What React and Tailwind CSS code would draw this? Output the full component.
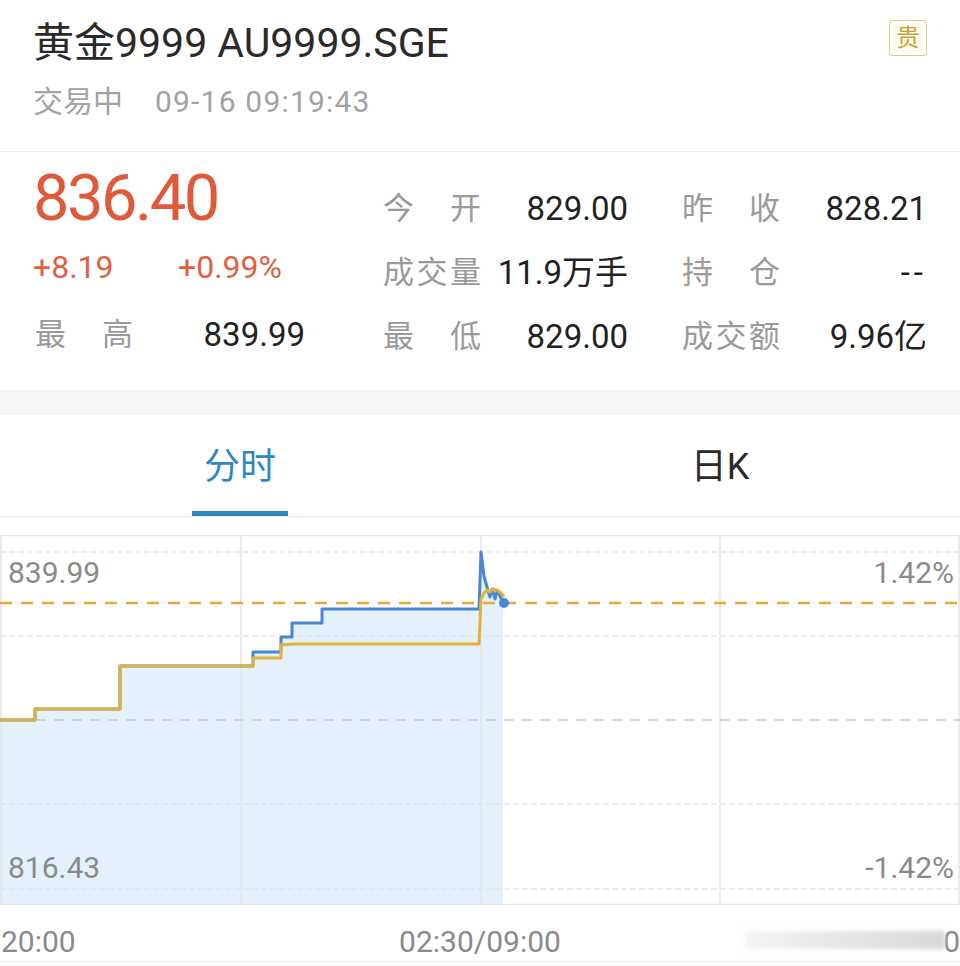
import React from "react";

const font = { fontFamily: '"Roboto", "Noto Sans CJK SC", sans-serif' };

const stats = [
  [["今", "开"], "829.00", ["昨", "收"], "828.21"],
  [["成", "交", "量"], "11.9万手", ["持", "仓"], "--"],
  [["最", "低"], "829.00", ["成", "交", "额"], "9.96亿"],
];

function Label({ chars }) {
  return (
    <div className="flex w-[98px] justify-between text-[31px] text-[#9a9a9a]">
      {chars.map((c, i) => (
        <span key={i}>{c}</span>
      ))}
    </div>
  );
}

function Chart() {
  const blue =
    "M0,185 L35,185 L35,174 L120,174 L120,131 L253,131 L253,117 L281,117 L281,102 L292,102 L292,88 L322,88 L322,74 L479,74 L481,17 L484,41 L487,52 L490,62 L492,54 L495,64 L497,56 L500,61 L503,68";
  const yellow =
    "M0,185 L35,185 L35,174 L120,174 L120,131 L253,131 L253,123 L281,123 L281,110 L293,109 L479,109 L481,64 L484,58 L487,55 L490,57 L493,54 L497,55 L501,58 L504,62";
  return (
    <div className="relative h-[370px] w-full">
      <svg width="960" height="370" viewBox="0 0 960 370" className="block">
        <path d={blue + " L503,370 L0,370 Z"} fill="#e4f1fc" />
        {[0.5, 17, 101, 269, 354, 369.5].map((y) => (
          <line key={y} x1="0" x2="960" y1={y} y2={y} stroke="#e4e4e4" strokeWidth="1.5" strokeDasharray={y === 0.5 || y === 369.5 ? "" : "6 3"} />
        ))}
        {[1, 241, 481, 720, 959].map((x) => (
          <line key={x} x1={x} x2={x} y1="0" y2="370" stroke="#e4e4e4" strokeWidth="1.5" />
        ))}
        <line x1="0" x2="960" y1="185" y2="185" stroke="#c9c9c9" strokeWidth="1.5" strokeDasharray="10 8" />
        <line x1="0" x2="960" y1="68" y2="68" stroke="#e8a83c" strokeWidth="2.5" strokeDasharray="12 9" />
        <path d={blue} fill="none" stroke="#4b86d6" strokeWidth="3" strokeLinejoin="round" />
        <path d={yellow} fill="none" stroke="#dfb33b" strokeWidth="3" strokeLinejoin="round" />
        <circle cx="504" cy="68" r="5" fill="#4b86d6" />
      </svg>
      <div className="absolute left-[8px] top-[21px] text-[30px] leading-[34px] text-[#8a8a8a]">839.99</div>
      <div className="absolute right-[6px] top-[21px] text-[30px] leading-[34px] text-[#8a8a8a]">1.42%</div>
      <div className="absolute left-[8px] top-[316px] text-[30px] leading-[34px] text-[#8a8a8a]">816.43</div>
      <div className="absolute right-[6px] top-[316px] text-[30px] leading-[34px] text-[#8a8a8a]">-1.42%</div>
    </div>
  );
}

export default function App() {
  return (
    <div className="h-[966px] w-[960px] overflow-hidden bg-white" style={font}>
      <div className="h-[152px] border-b border-[#ededed] px-[35px] pt-[19px]">
        <div className="flex items-start justify-between">
          <h1 className="-ml-[2px] text-[41px] leading-[48px] text-[#2a2a2a]">黄金9999 AU9999.SGE</h1>
          <div className="-mr-[2px] mt-px flex h-[36px] w-[38px] items-center justify-center rounded-[3px] border border-[#dcc98c] bg-[#fffdf4] text-[24px] text-[#caa22e]">
            贵
          </div>
        </div>
        <div className="mt-[15px] flex text-[30px] leading-[40px] text-[#a3a3a3]">
          <span className="-ml-[2px]">交易中</span>
          <span className="ml-[32px] tracking-[1.2px]">09-16 09:19:43</span>
        </div>
      </div>

      <div className="flex h-[238px] pl-[35px] pr-[33px]">
        <div className="w-[270px]">
          <div className="-ml-[2px] mt-[11px] h-[70px] text-[65px] leading-[70px] tracking-[-2.5px] text-[#df5a3b]">836.40</div>
          <div className="-ml-[2px] flex h-[68px] items-center text-[32px] text-[#e0603f]">
            <span className="w-[145px]">+8.19</span>
            <span>+0.99%</span>
          </div>
          <div className="flex h-[68px] items-center justify-between">
            <Label chars={["最", "高"]} />
            <span className="text-[33px] text-[#222]">839.99</span>
          </div>
        </div>
        <div className="ml-[78px] pt-[25px]">
          {stats.map((r, i) => (
            <div key={i} className="flex h-[64px] items-center">
              <Label chars={r[0]} />
              <span className="w-[147px] text-right text-[33px] text-[#222]">{r[1]}</span>
              <div className="ml-[54px]">
                <Label chars={r[2]} />
              </div>
              <span className={"w-[147px] text-right text-[33px] text-[#222]" + (r[3] === "--" ? " tracking-[4px] -mr-[4px]" : "")}>{r[3]}</span>
            </div>
          ))}
        </div>
      </div>

      <div className="h-[25px] bg-[#f6f6f6]" />

      <div className="flex h-[102px] border-b border-[#ececec]">
        <div className="relative flex flex-1 items-center justify-center pt-[2px] text-[36px] text-[#2d87c3]">
          分时
          <div className="absolute bottom-0 left-[192px] h-[5px] w-[96px] bg-[#2d87c3]" />
        </div>
        <div className="flex flex-1 items-center justify-center pt-[2px] text-[36px] text-[#2a2a2a]">日K</div>
      </div>

      <div className="h-[18px]" />

      <Chart />

      <div className="relative grid h-[57px] grid-cols-3 items-center border-b border-[#e6e6e6] pt-[14px] text-[30px] text-[#8a8a8a]">
        <span className="pl-[1px]">20:00</span>
        <span className="text-center">02:30/09:00</span>
        <span className="text-right">0</span>
        <div className="absolute left-[745px] top-[26px] h-[18px] w-[200px] bg-gradient-to-r from-[#f4f4f4] to-[#d8d8d8] blur-[2px]" />
      </div>
    </div>
  );
}
